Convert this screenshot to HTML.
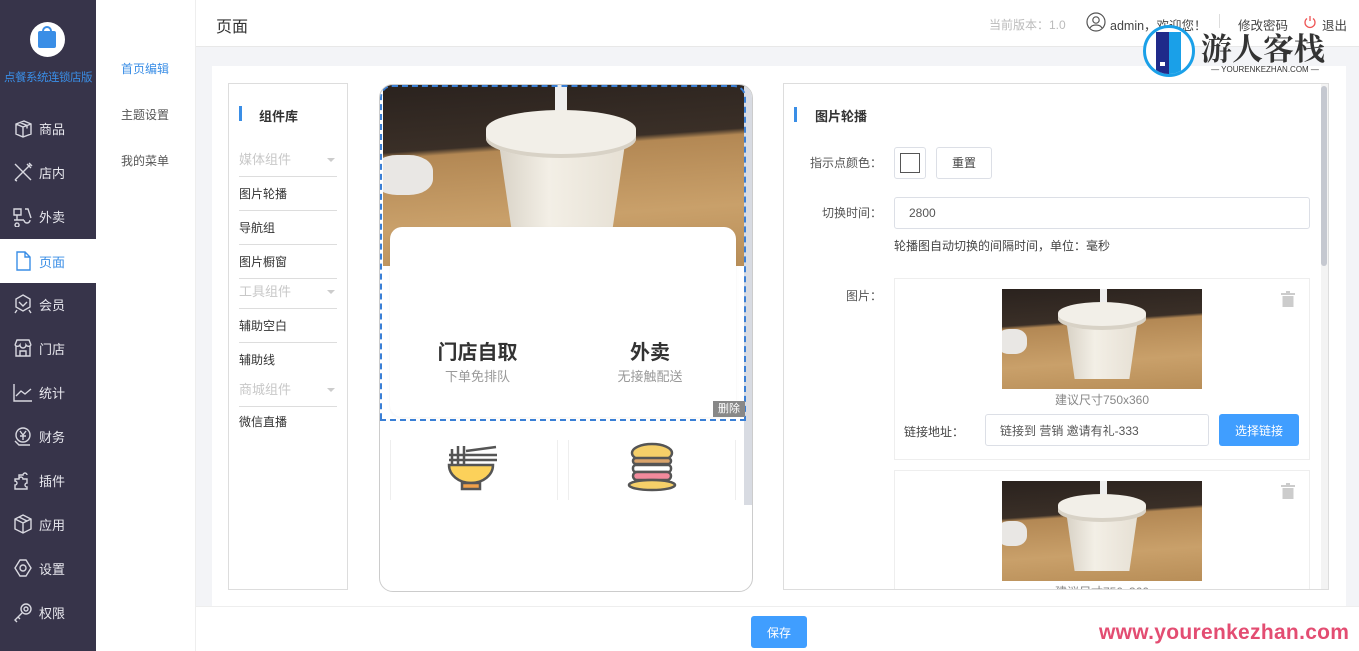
<!DOCTYPE html>
<html><head><meta charset="utf-8"><style>
*{margin:0;padding:0;box-sizing:border-box}
body{width:1359px;height:651px;overflow:hidden;font-family:"Liberation Sans","Noto Sans CJK SC",sans-serif;font-size:12px;color:#333;background:#fff;position:relative}
.abs{position:absolute}
#side{left:0;top:0;width:96px;height:651px;background:#37344a}
.nav{position:absolute;left:0;width:96px;height:44px;color:#e8e8ee;font-size:13px;display:flex;align-items:center;padding-left:12px}
.nav svg{width:22px;height:22px;margin-right:5px;fill:none;stroke:#d8d8e0;stroke-width:1.4}
.nav.act{background:#fff;color:#3a8ee6}
.nav.act svg{stroke:#3a8ee6}
#sub{left:96px;top:0;width:100px;height:651px;background:#fff;border-right:1px solid #eee}
.si{position:absolute;left:25px;font-size:12px;color:#555}
#hdr{left:196px;top:0;width:1163px;height:47px;border-bottom:1px solid #e8e8e8;background:#fff}
#main{left:196px;top:47px;width:1163px;height:559px;background:#f3f4f7}
#panel{left:212px;top:66px;width:1134px;height:540px;background:#fff}
#lib{left:228px;top:83px;width:120px;height:507px;border:1px solid #ddd;background:#fff}
.li{position:absolute;left:10px;width:98px;height:34px;line-height:34px;font-size:12px;color:#333;border-bottom:1px solid #ddd}
.li.g{color:#c8c8c8;font-size:13px}
.li.g:after{content:"";position:absolute;right:2px;top:15px;border:4px solid transparent;border-top:4px solid #ccc}
.photo{position:absolute;overflow:hidden;background:linear-gradient(176deg,#2a221e 0%,#3a2f27 33%,#b38854 36%,#c9a06a 70%,#b88e58 100%)}
.photo .cup{position:absolute;background:linear-gradient(90deg,#d8d2c6,#f3efe6 40%,#e6e0d4);clip-path:polygon(0 0,100% 0,88% 100%,12% 100%)}
.photo .lid{position:absolute;background:#f2efe8;border-radius:50%/40%;box-shadow:inset 0 -4px 0 #d8d2c6}
.photo .str{position:absolute;background:#eee}
.photo .nap{position:absolute;background:#e9e7e4;border-radius:40%}
#phone{left:379px;top:84px;width:374px;height:508px;border:1px solid #ccc;border-radius:14px;background:#fff;overflow:hidden}
#right{left:783px;top:83px;width:546px;height:507px;border:1px solid #ddd;background:#fff;overflow:hidden}
.lbl{position:absolute;font-size:12px;color:#555;text-align:right}
.inp{position:absolute;border:1px solid #dcdfe6;border-radius:3px;background:#fff;font-size:12px;color:#555;padding-left:14px;display:flex;align-items:center}
.btnb{position:absolute;background:#409eff;color:#fff;border-radius:3px;font-size:12px;display:flex;align-items:center;justify-content:center}
.trash{position:absolute;width:14px;height:16px}
</style></head><body>

<div id="side" class="abs">
 <div class="abs" style="left:30px;top:22px;width:35px;height:35px;border-radius:50%;background:#fff"></div>
 <div class="abs" style="left:38px;top:31px;width:18px;height:17px;background:#3a8ee6;border-radius:2px"></div>
 <div class="abs" style="left:42px;top:26px;width:10px;height:9px;border:2px solid #3a8ee6;border-bottom:none;border-radius:5px 5px 0 0"></div>
 <div class="abs" style="left:0;top:69px;width:96px;text-align:center;font-size:11.5px;color:#3a8ee6;white-space:nowrap;letter-spacing:-0.5px">点餐系统连锁店版</div>

 <div class="nav" style="top:106px"><svg viewBox="0 0 22 22"><path d="M4 7l8-3 7 3v10l-8 3-7-3z M4 7l7 3 8-3 M11 10v10 M8 5.5l7 3v3"/></svg>商品</div>
 <div class="nav" style="top:150px"><svg viewBox="0 0 22 22"><path d="M3 3l16 16 M19 3L3 19 M3 19l2 1 M15 3l4 4 M17 2l3 3"/></svg>店内</div>
 <div class="nav" style="top:194px"><svg viewBox="0 0 22 22"><path d="M2 4h7v6H2z M5 10v5 M2 15h10 M13 4h3l3 9 M12 15a3 3 0 1 0 6 0 M5 18a2 2 0 1 0 0.1 0"/></svg>外卖</div>
 <div class="nav act" style="top:239px"><svg viewBox="0 0 22 22"><path d="M5 2h8l5 5v13H5z M13 2v5h5"/></svg>页面</div>
 <div class="nav" style="top:282px"><svg viewBox="0 0 22 22"><path d="M11 2l7 4v8l-7 4-7-4V6z M7 9l4 4 4-4 M5 17l-2 3 M17 17l2 3"/></svg>会员</div>
 <div class="nav" style="top:326px"><svg viewBox="0 0 22 22"><path d="M3 8l2-5h12l2 5 M3 8a3 3 0 0 0 5 0 3 3 0 0 0 6 0 3 3 0 0 0 5 0 M4 9v10h14V9 M8 19v-5h6v5"/></svg>门店</div>
 <div class="nav" style="top:370px"><svg viewBox="0 0 22 22"><path d="M2 3v17h18 M4 15l5-5 4 3 6-5"/></svg>统计</div>
 <div class="nav" style="top:414px"><svg viewBox="0 0 22 22"><circle cx="11" cy="10" r="7"/><path d="M8 6l3 4 3-4 M8 11h6 M11 10v5 M3 16l4 4h11"/></svg>财务</div>
 <div class="nav" style="top:458px"><svg viewBox="0 0 22 22"><path d="M3 10h4a2 2 0 1 1 4 0h4v4a2 2 0 1 0 0 4v2H3v-4a2 2 0 1 0 0-4z M7 10V6h4a2 2 0 1 1 4 0"/></svg>插件</div>
 <div class="nav" style="top:502px"><svg viewBox="0 0 22 22"><path d="M11 2l8 4v10l-8 4-8-4V6z M3 6l8 4 8-4 M11 10v10 M7 4l8 4"/></svg>应用</div>
 <div class="nav" style="top:546px"><svg viewBox="0 0 22 22"><path d="M8 3h6l5 8-5 8H8l-5-8z"/><circle cx="11" cy="11" r="3"/></svg>设置</div>
 <div class="nav" style="top:590px"><svg viewBox="0 0 22 22"><circle cx="14" cy="8" r="5"/><circle cx="14" cy="8" r="2"/><path d="M10 12l-7 7 2 2 M6 16l2 2"/></svg>权限</div>
</div>

<div id="sub" class="abs">
 <div class="si" style="top:60px;color:#3a8ee6">首页编辑</div>
 <div class="si" style="top:106px">主题设置</div>
 <div class="si" style="top:152px">我的菜单</div>
</div>

<div id="hdr" class="abs">
 <div class="abs" style="left:20px;top:13px;font-size:16px;color:#333">页面</div>
 <div class="abs" style="left:793px;top:16px;font-size:12px;color:#bbb">当前版本：1.0</div>
 <svg class="abs" style="left:890px;top:12px" width="20" height="20" viewBox="0 0 20 20" fill="none" stroke="#555" stroke-width="1.2"><circle cx="10" cy="10" r="9"/><circle cx="10" cy="8" r="3.2"/><path d="M4 16c2-4 10-4 12 0"/></svg>
 <div class="abs" style="left:914px;top:15px;font-size:12.5px;color:#444">admin，欢迎您！</div>
 <div class="abs" style="left:1023px;top:14px;width:1px;height:14px;background:#ddd"></div>
 <div class="abs" style="left:1042px;top:15px;font-size:12.5px;color:#444">修改密码</div>
 <svg class="abs" style="left:1107px;top:15px" width="14" height="14" viewBox="0 0 14 14" fill="none" stroke="#e55" stroke-width="1.3"><path d="M4 3.5a5 5 0 1 0 6 0 M7 1v5"/></svg>
 <div class="abs" style="left:1126px;top:15px;font-size:12.5px;color:#444">退出</div>
</div>

<div id="main" class="abs"></div>
<div id="panel" class="abs"></div>

<div id="lib" class="abs">
 <div class="abs" style="left:10px;top:22px;width:3px;height:15px;background:#3a8ee6"></div>
 <div class="abs" style="left:30px;top:22px;font-size:13px;font-weight:bold;color:#333">组件库</div>
 <div class="li g" style="top:59px">媒体组件</div>
 <div class="li" style="top:93px">图片轮播</div>
 <div class="li" style="top:127px">导航组</div>
 <div class="li" style="top:161px">图片橱窗</div>
 <div class="li g" style="top:191px">工具组件</div>
 <div class="li" style="top:225px">辅助空白</div>
 <div class="li" style="top:259px;border:none">辅助线</div>
 <div class="li g" style="top:289px">商城组件</div>
 <div class="li" style="top:321px;border:none">微信直播</div>
</div>

<div id="phone" class="abs">
 <div class="photo" style="left:3px;top:0;width:362px;height:181px">
  <div class="nap" style="left:-10px;top:70px;width:60px;height:40px"></div>
  <div class="str" style="left:172px;top:0;width:12px;height:30px"></div>
  <div class="cup" style="left:115px;top:52px;width:128px;height:105px"></div>
  <div class="lid" style="left:103px;top:25px;width:150px;height:48px"></div>
 </div>
 <div class="abs" style="left:364px;top:0;width:8px;height:420px;background:#d8dbe2"></div>
 <div class="abs" style="left:10px;top:142px;width:346px;height:190px;background:#fff;border-radius:12px;box-shadow:0 1px 3px rgba(0,0,0,.05)"></div>
 <div class="abs" style="left:40px;top:251px;width:115px;text-align:center;font-size:20px;font-weight:bold;color:#333">门店自取</div>
 <div class="abs" style="left:40px;top:281px;width:115px;text-align:center;font-size:13px;color:#999">下单免排队</div>
 <div class="abs" style="left:210px;top:251px;width:120px;text-align:center;font-size:20px;font-weight:bold;color:#333">外卖</div>
 <div class="abs" style="left:210px;top:281px;width:120px;text-align:center;font-size:13px;color:#999">无接触配送</div>
 <div class="abs" style="left:0;top:0;width:366px;height:336px;border:2px dashed #3a7fd5;border-radius:12px 12px 0 0"></div>
 <div class="abs" style="left:333px;top:316px;width:32px;height:16px;background:#888;color:#fff;font-size:11px;text-align:center;line-height:16px">删除</div>
 <div class="abs" style="left:10px;top:355px;width:1px;height:60px;background:#eee"></div>
 <div class="abs" style="left:177px;top:355px;width:1px;height:60px;background:#eee"></div>
 <div class="abs" style="left:188px;top:355px;width:1px;height:60px;background:#eee"></div>
 <div class="abs" style="left:355px;top:355px;width:1px;height:60px;background:#eee"></div>
 <svg class="abs" style="left:66px;top:356px" width="54" height="54" viewBox="0 0 54 54"><g stroke="#555" stroke-width="2.5" fill="none"><path d="M3 14h48 M3 19h48 M6 8v16 M12 5v19 M18 5v19 M20 10l30-4"/></g><path d="M3 24h44a22 18 0 0 1-44 0z" fill="#fcd15a" stroke="#555" stroke-width="2.5"/><rect x="16" y="42" width="18" height="6" fill="#f0a04a" stroke="#555" stroke-width="2.5"/></svg>
 <svg class="abs" style="left:246px;top:356px" width="54" height="54" viewBox="0 0 54 54" stroke="#555" stroke-width="2.5"><ellipse cx="26" cy="12" rx="20" ry="9" fill="#f5cf69"/><rect x="7" y="17" width="38" height="6" rx="3" fill="#d9a36a"/><rect x="7" y="24" width="38" height="7" rx="3" fill="#fff"/><rect x="7" y="31" width="38" height="8" rx="4" fill="#f18a9c"/><ellipse cx="26" cy="44" rx="23" ry="5" fill="#f5cf69"/></svg>
</div>

<div id="right" class="abs">
 <div class="abs" style="left:10px;top:23px;width:3px;height:15px;background:#3a8ee6"></div>
 <div class="abs" style="left:31px;top:22px;font-size:13px;font-weight:bold;color:#333">图片轮播</div>
 <div class="lbl" style="left:10px;top:70px;width:88px">指示点颜色：</div>
 <div class="abs" style="left:110px;top:63px;width:32px;height:32px;border:1px solid #dcdfe6;border-radius:3px"></div>
 <div class="abs" style="left:116px;top:69px;width:20px;height:20px;border:1px solid #555"></div>
 <div class="abs" style="left:152px;top:63px;width:56px;height:32px;border:1px solid #dcdfe6;border-radius:3px;text-align:center;line-height:30px;font-size:12px;color:#444">重置</div>
 <div class="lbl" style="left:10px;top:120px;width:88px">切换时间：</div>
 <div class="inp" style="left:110px;top:113px;width:416px;height:32px">2800</div>
 <div class="abs" style="left:110px;top:153px;font-size:12px;color:#444">轮播图自动切换的间隔时间，单位：毫秒</div>
 <div class="lbl" style="left:10px;top:203px;width:88px">图片：</div>

 <div class="abs" style="left:110px;top:194px;width:416px;height:182px;border:1px solid #eee"></div>
 <div class="photo" style="left:218px;top:205px;width:200px;height:100px">
  <div class="nap" style="left:-5px;top:40px;width:30px;height:25px"></div>
  <div class="str" style="left:98px;top:0;width:7px;height:15px"></div>
  <div class="cup" style="left:64px;top:30px;width:72px;height:60px"></div>
  <div class="lid" style="left:56px;top:13px;width:88px;height:28px"></div>
 </div>
 <div class="abs" style="left:218px;top:307px;width:200px;text-align:center;font-size:12px;color:#888">建议尺寸750x360</div>
 <div class="abs" style="left:120px;top:339px;font-size:12px;color:#444">链接地址：</div>
 <div class="inp" style="left:201px;top:330px;width:224px;height:32px">链接到 营销 邀请有礼-333</div>
 <div class="btnb" style="left:435px;top:330px;width:80px;height:32px">选择链接</div>
 <svg class="trash" style="left:497px;top:207px" viewBox="0 0 14 16"><rect x="0" y="2" width="14" height="2" fill="#ccc"/><rect x="5" y="0" width="4" height="2" fill="#ccc"/><rect x="1.5" y="5" width="11" height="11" fill="#ccc"/></svg>

 <div class="abs" style="left:110px;top:386px;width:416px;height:182px;border:1px solid #eee"></div>
 <div class="photo" style="left:218px;top:397px;width:200px;height:100px">
  <div class="nap" style="left:-5px;top:40px;width:30px;height:25px"></div>
  <div class="str" style="left:98px;top:0;width:7px;height:15px"></div>
  <div class="cup" style="left:64px;top:30px;width:72px;height:60px"></div>
  <div class="lid" style="left:56px;top:13px;width:88px;height:28px"></div>
 </div>
 <div class="abs" style="left:218px;top:499px;width:200px;text-align:center;font-size:12px;color:#888">建议尺寸750x360</div>
 <svg class="trash" style="left:497px;top:399px" viewBox="0 0 14 16"><rect x="0" y="2" width="14" height="2" fill="#ccc"/><rect x="5" y="0" width="4" height="2" fill="#ccc"/><rect x="1.5" y="5" width="11" height="11" fill="#ccc"/></svg>
 <div class="abs" style="left:537px;top:0;width:7px;height:507px;background:#f3f3f3"></div>
 <div class="abs" style="left:537px;top:2px;width:6px;height:180px;background:#c5c8d0;border-radius:3px"></div>
</div>

<div class="abs" style="left:196px;top:606px;width:1163px;height:45px;background:#fff;border-top:1px solid #eee"></div>
<div class="btnb" style="left:751px;top:616px;width:56px;height:32px;font-size:12px">保存</div>

<!-- watermark -->
<div class="abs" style="left:1143px;top:25px;width:52px;height:52px;border-radius:50%;border:3px solid #1aa0e8;background:#fff;overflow:hidden">
 <div class="abs" style="left:10px;top:4px;width:13px;height:42px;background:#1f2a8a"></div>
 <div class="abs" style="left:23px;top:4px;width:12px;height:42px;background:#1aa0e8"></div>
 <div class="abs" style="left:14px;top:34px;width:5px;height:4px;background:#fff"></div>
</div>
<div class="abs" style="left:1201px;top:24px;font-family:'Noto Serif CJK SC',serif;font-size:31px;font-weight:bold;color:#333;letter-spacing:0">游人客栈</div>
<div class="abs" style="left:1201px;top:65px;width:128px;font-size:8px;color:#333;text-align:center;white-space:nowrap">— YOURENKEZHAN.COM —</div>
<div class="abs" style="left:1099px;top:621px;font-size:21px;font-weight:bold;color:#e34d72;letter-spacing:0.3px">www.yourenkezhan.com</div>
</body></html>
